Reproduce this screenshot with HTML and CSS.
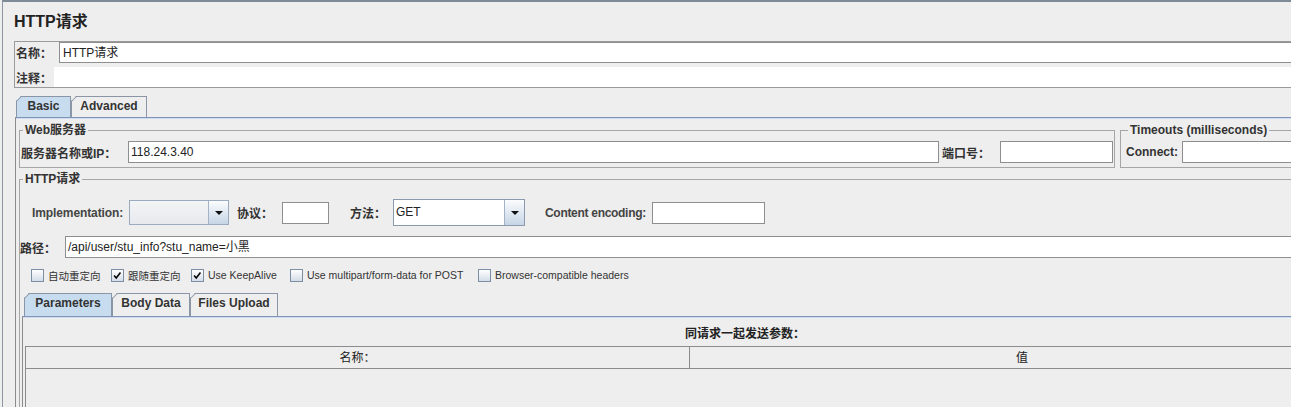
FILE: index.html
```html
<!DOCTYPE html>
<html lang="zh">
<head>
    <meta charset="UTF-8">
    <title>HTTP请求</title>
    <link rel="stylesheet" href="styles.css">
</head>
<body>
    <div class="window">
        <h1 class="title">HTTP请求</h1>

        <div class="name-panel">
            <div class="name-row">
                <span class="lbl name-lbl">名称：</span>
                <div class="field grow">HTTP请求</div>
            </div>
            <div class="comment-row">
                <span class="lbl comment-lbl">注释：</span>
                <div class="comment-field"></div>
            </div>
        </div>

        <div class="tabs">
            <div class="tab active basic">Basic</div>
            <div class="tab advanced">Advanced</div>
        </div>

        <div class="tab-panel">
            <div class="server-row">
                <fieldset class="group web-group">
                    <legend>Web服务器</legend>
                    <div class="row">
                        <span class="lbl host-lbl">服务器名称或IP：</span>
                        <div class="field host">118.24.3.40</div>
                        <span class="lbl port-lbl">端口号：</span>
                        <div class="field port"></div>
                    </div>
                </fieldset>
                <fieldset class="group timeout-group">
                    <legend>Timeouts (milliseconds)</legend>
                    <div class="row">
                        <span class="lbl connect-lbl">Connect:</span>
                        <div class="field grow"></div>
                    </div>
                </fieldset>
            </div>

            <fieldset class="group http-group">
                <legend>HTTP请求</legend>

                <div class="impl-row">
                    <span class="lbl impl-lbl">Implementation:</span>
                    <div class="combo impl">
                        <div class="combo-value"></div>
                        <div class="combo-btn"><span class="arrow"></span></div>
                    </div>
                    <span class="lbl proto-lbl">协议：</span>
                    <div class="field proto"></div>
                    <span class="lbl method-lbl">方法：</span>
                    <div class="combo method">
                        <div class="combo-value">GET</div>
                        <div class="combo-btn"><span class="arrow"></span></div>
                    </div>
                    <span class="lbl enc-lbl">Content encoding:</span>
                    <div class="field enc"></div>
                </div>

                <div class="path-row">
                    <span class="lbl path-lbl">路径：</span>
                    <div class="field grow">/api/user/stu_info?stu_name=小黑</div>
                </div>

                <div class="check-row">
                    <div class="check-item w80"><span class="box"></span><span>自动重定向</span></div>
                    <div class="check-item w80"><span class="box checked"><svg viewBox="0 0 13 13"><polyline points="2.5,6.5 5,9.5 10,3"/></svg></span><span>跟随重定向</span></div>
                    <div class="check-item w99"><span class="box checked"><svg viewBox="0 0 13 13"><polyline points="2.5,6.5 5,9.5 10,3"/></svg></span><span>Use KeepAlive</span></div>
                    <div class="check-item w188"><span class="box"></span><span>Use multipart/form-data for POST</span></div>
                    <div class="check-item"><span class="box"></span><span>Browser-compatible headers</span></div>
                </div>

                <div class="params">
                    <div class="subtabs">
                        <div class="tab sub active w88">Parameters</div>
                        <div class="tab sub w78">Body Data</div>
                        <div class="tab sub w88">Files Upload</div>
                    </div>
                    <div class="params-pane">
                        <div class="caption">同请求一起发送参数：</div>
                        <div class="table">
                            <div class="table-head">
                                <div class="th first">名称：</div>
                                <div class="th">值</div>
                            </div>
                        </div>
                    </div>
                </div>
            </fieldset>
        </div>
    </div>
</body>
</html>
```

FILE: styles.css
```css
html, body {
    margin: 0;
    overflow: hidden;
}
body {
    width: 1291px;
    height: 407px;
    background: #eeeeee;
    font-family: "Liberation Sans", "Noto Sans CJK SC", sans-serif;
    font-size: 12px;
    color: #333;
}
.window {
    width: 1480px;
    height: 405px;
    margin-left: 2px;
    border-top: 2px solid #7d8a97;
    border-left: 1px solid #8d97a2;
    padding-left: 11px;
}
.title {
    margin: 0 0 9px;
    padding-top: 10px;
    font-size: 16px;
    line-height: 20px;
    height: 20px;
    font-weight: bold;
    color: #222;
}
.lbl {
    font-weight: bold;
    white-space: nowrap;
    color: #333;
    flex: none;
}
.field {
    box-sizing: border-box;
    height: 22px;
    background: #fff;
    border: 1px solid #8e8e8e;
    padding-left: 2px;
    line-height: 20px;
    white-space: nowrap;
    color: #222;
    flex: none;
}
.grow {
    flex: 1;
}

/* name / comment */
.name-panel {
    border: 1px solid #9b9b9b;
    border-right: none;
    padding-left: 1px;
}
.name-row {
    display: flex;
    align-items: center;
    height: 21px;
}
.name-row .field {
    height: 21px;
    padding-left: 3px;
}
.name-lbl {
    width: 43px;
}
.comment-row {
    display: flex;
    align-items: center;
    height: 20px;
    margin-top: 4px;
}
.comment-lbl {
    width: 38px;
}
.comment-field {
    flex: 1;
    height: 20px;
    background: #fff;
}

/* tabs */
.tabs, .subtabs {
    display: flex;
    align-items: flex-end;
}
.tabs {
    margin-top: 8px;
    padding-left: 2px;
}
.tab {
    position: relative;
    box-sizing: border-box;
    height: 21px;
    border: 1px solid #8a96a6;
    border-bottom: none;
    background: #eeeeee;
    font-weight: bold;
    color: #333;
    text-align: center;
    line-height: 18px;
    clip-path: polygon(5px 0, 100% 0, 100% 100%, 0 100%, 0 5px);
}
.tab::before {
    content: "";
    position: absolute;
    left: -1px;
    top: 4px;
    width: 7px;
    height: 1px;
    background: #8a96a6;
    transform-origin: 0 0;
    transform: rotate(-45deg);
}
.tab.active {
    background: #c8dcf0;
}
.basic { width: 55px; }
.advanced { width: 76px; }

.tab-panel {
    margin-left: 1px;
    border-top: 1px solid #8094b6;
    border-left: 1px solid #8c8c8c;
    box-shadow: inset 0 1px 0 #cddcf0;
    padding-top: 5px;
    height: 300px;
}

/* fieldsets */
.group {
    box-sizing: border-box;
    margin: 0;
    min-width: 0;
    padding: 4px 1px;
    border: 1px solid #a6a6a6;
}
.group legend {
    height: 14px;
    line-height: 14px;
    padding: 0 2px;
    margin-left: 2px;
    font-weight: bold;
    color: #333;
}
.row {
    display: flex;
    align-items: center;
    height: 22px;
}
.server-row {
    display: flex;
    margin-left: 3px;
}
.web-group {
    width: 1096px;
    flex: none;
}
.host-lbl { width: 107px; }
.host { width: 811px; }
.port-lbl { width: 58px; margin-left: 3px; }
.port { width: 113px; }
.timeout-group {
    flex: 1;
    margin-left: 5px;
    padding-left: 5px;
    border-right: none;
}
.connect-lbl { width: 56px; }

.http-group {
    margin: 4px 0 0 3px;
    padding: 13px 0 0 1px;
    border-right: none;
    height: 400px;
}

/* implementation row */
.impl-row {
    display: flex;
    align-items: center;
    height: 27px;
    margin-left: 11px;
}
.impl-lbl { width: 97px; color: #444; letter-spacing: -0.1px; }
.proto-lbl { width: 45px; margin-left: 8px; }
.method-lbl { width: 43px; margin-left: 21px; }
.enc-lbl { width: 107px; margin-left: 20px; color: #444; letter-spacing: -0.3px; }
.proto { width: 47px; }
.enc { width: 113px; }

.combo {
    box-sizing: border-box;
    display: flex;
    flex: none;
    border: 1px solid #9aabbf;
}
.combo.impl {
    width: 100px;
    height: 25px;
}
.combo.method {
    width: 132px;
    height: 27px;
    border-color: #8c9aae;
}
.combo-value {
    flex: 1;
    padding-left: 2px;
    line-height: 25px;
    color: #222;
}
.impl .combo-value {
    background: linear-gradient(#f3f4f6, #e6e9ed);
}
.method .combo-value {
    background: #fff;
}
.combo-btn {
    width: 19px;
    border-left: 1px solid #a3b2c5;
    background: linear-gradient(#fbfcfd, #c6d5e6);
    display: flex;
    align-items: center;
    justify-content: center;
}
.arrow {
    width: 0;
    height: 0;
    border-left: 4px solid transparent;
    border-right: 4px solid transparent;
    border-top: 4px solid #111;
}

/* path */
.path-row {
    display: flex;
    align-items: center;
    height: 22px;
    margin: 10px 0 0 -1px;
}
.path-lbl { width: 45px; }

/* checkboxes */
.check-row {
    display: flex;
    align-items: center;
    height: 16px;
    margin: 9px 0 0 10px;
    font-size: 10.5px;
    color: #333;
}
.check-item {
    display: flex;
    align-items: center;
    gap: 4px;
    flex: none;
    white-space: nowrap;
}
.w80 { width: 80px; }
.w99 { width: 99px; }
.w188 { width: 188px; }
.box {
    box-sizing: border-box;
    width: 13px;
    height: 13px;
    border: 1px solid #7c8ea4;
    background: linear-gradient(#ffffff, #d3dce7);
    display: flex;
}
.box svg {
    width: 11px;
    height: 11px;
    fill: none;
    stroke: #000;
    stroke-width: 1.8;
}

/* parameters */
.params {
    margin: 10px 0 0 1px;
}
.subtabs {
    padding-left: 2px;
}
.tab.sub {
    height: 23px;
    line-height: 18px;
}
.w88 { width: 88px; }
.w78 { width: 78px; }
.params-pane {
    border-top: 1px solid #8094b6;
    border-left: 1px solid #8c8c8c;
    box-shadow: inset 0 1px 0 #cddcf0;
    height: 120px;
}
.caption {
    width: 1444px;
    padding-top: 10px;
    margin-bottom: 5px;
    line-height: 14px;
    height: 14px;
    text-align: center;
    font-weight: bold;
    color: #222;
}
.table {
    margin-left: 2px;
    width: 1328px;
    height: 80px;
    border-top: 1px solid #8c8c8c;
    border-left: 1px solid #8c8c8c;
}
.table-head {
    display: flex;
    height: 21px;
    border-bottom: 1px solid #8c8c8c;
}
.th {
    width: 664px;
    text-align: center;
    line-height: 22px;
    color: #222;
}
.th.first {
    width: 663px;
    border-right: 1px solid #8c8c8c;
}
```
